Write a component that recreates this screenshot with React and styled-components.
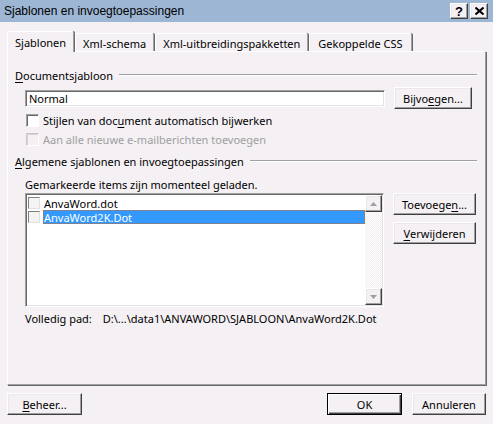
import React from "react";
import styled, { createGlobalStyle, css } from "styled-components";

const GlobalStyle = createGlobalStyle`
  html, body { margin: 0; padding: 0; background: #f4f0f4; }
  * { box-sizing: border-box; }
  body { font-family: "Noto Sans", "Liberation Sans", sans-serif; font-size: 11px; color: #000; }
`;

const FACE = "#f4f0f4";

const raised = css`
  border-top: 1px solid #ffffff;
  border-left: 1px solid #ffffff;
  border-right: 1px solid #404040;
  border-bottom: 1px solid #404040;
  box-shadow: inset -1px -1px 0 #a0a0a0, inset 1px 1px 0 #ebe7eb;
`;

const sunken = css`
  border-top: 1px solid #a0a0a0;
  border-left: 1px solid #a0a0a0;
  border-right: 1px solid #ffffff;
  border-bottom: 1px solid #ffffff;
  box-shadow: inset 1px 1px 0 #696969, inset -1px -1px 0 #e3e3e3;
`;

const Window = styled.div`
  width: 493px;
  height: 424px;
  background: ${FACE};
  display: flex;
  flex-direction: column;
  overflow: hidden;
`;

const TitleBar = styled.div`
  height: 22px;
  background: #9db6d4;
  display: flex;
  align-items: center;
  padding: 0 5px 0 4px;
`;

const TitleText = styled.div`
  flex: 1;
  font-family: "Liberation Sans", "Noto Sans", sans-serif;
  font-size: 12px;
  color: #000;
  line-height: 22px;
  white-space: nowrap;
`;

const CaptionButtons = styled.div`
  display: flex;
  gap: 2px;
`;

const CaptionButton = styled.div`
  width: 18px;
  height: 16px;
  background: ${FACE};
  ${raised};
  display: flex;
  align-items: center;
  justify-content: center;
  font-weight: bold;
  font-size: 13px;
  font-family: "Liberation Sans", sans-serif;
  line-height: 1;
`;

const Body = styled.div`
  flex: 1;
  display: flex;
  flex-direction: column;
  padding: 9px 7px 0 7px;
`;

const TabStrip = styled.div`
  display: flex;
  align-items: flex-end;
  height: 20px;
  position: relative;
  z-index: 1;
`;

const Tab = styled.div`
  height: ${(p) => (p.$active ? "21px" : "18px")};
  margin-bottom: ${(p) => (p.$active ? "-1px" : "0")};
  padding: 0 ${(p) => p.$pad}px;
  background: ${FACE};
  border-top: 1px solid #ffffff;
  border-left: 1px solid #ffffff;
  border-right: 1px solid #a0a0a0;
  box-shadow: 1px 0 0 #696969;
  border-radius: 2px 2px 0 0;
  display: flex;
  align-items: flex-start;
  padding-top: ${(p) => (p.$active ? "3px" : "2px")};
  white-space: nowrap;
  margin-right: 1px;
`;

const TabPanel = styled.div`
  width: 479px;
  height: 334px;
  border-top: 1px solid #ffffff;
  border-left: 1px solid #ffffff;
  border-right: 1px solid #a0a0a0;
  border-bottom: 1px solid #a0a0a0;
  box-shadow: 1px 1px 0 #696969;
  padding: 16px 8px 0 7px;
  display: flex;
  flex-direction: column;
`;

const GroupHeader = styled.div`
  display: flex;
  align-items: center;
  height: 14px;
  margin-top: ${(p) => p.$mt || 0}px;
  white-space: nowrap;
  &::after {
    content: "";
    flex: 1;
    margin-left: 6px;
    height: 0;
    border-top: 1px solid #a0a0a0;
    border-bottom: 1px solid #ffffff;
  }
`;

const U = styled.span`
  text-decoration: underline;
  text-underline-offset: 2px;
`;

const InputRow = styled.div`
  display: flex;
  align-items: center;
  height: 22px;
  margin-top: 5px;
  padding-left: 10px;
`;

const TextInput = styled.div`
  width: 360px;
  height: 17px;
  background: #ffffff;
  ${sunken};
  padding: 0 3px;
  display: flex;
  align-items: center;
  line-height: 1;
`;

const Button = styled.div`
  width: ${(p) => p.$w}px;
  height: 22px;
  margin-left: ${(p) => p.$ml || 0}px;
  background: ${FACE};
  ${(p) =>
    p.$default
      ? css`
          border: 1px solid #000;
          box-shadow: inset 1px 1px 0 #ffffff, inset -1px -1px 0 #404040, inset -2px -2px 0 #a0a0a0;
        `
      : raised};
  display: flex;
  align-items: center;
  justify-content: center;
  white-space: nowrap;
  flex-shrink: 0;
`;

const CheckRow = styled.div`
  display: flex;
  align-items: center;
  height: 13px;
  margin-top: ${(p) => p.$mt}px;
  padding-left: 11px;
  color: ${(p) => (p.$disabled ? "#a0a0a0" : "#000")};
  white-space: nowrap;
`;

const CheckBox = styled.span`
  width: 13px;
  height: 13px;
  flex-shrink: 0;
  background: ${(p) => (p.$disabled ? FACE : "#ffffff")};
  border-top: 1px solid ${(p) => (p.$disabled ? "#c8c4c8" : "#a0a0a0")};
  border-left: 1px solid ${(p) => (p.$disabled ? "#c8c4c8" : "#a0a0a0")};
  border-right: 1px solid #ffffff;
  border-bottom: 1px solid #ffffff;
  box-shadow: inset 1px 1px 0 ${(p) => (p.$disabled ? "#d8d4d8" : "#696969")};
  margin-right: 4px;
`;

const Caption = styled.div`
  height: 14px;
  display: flex;
  align-items: center;
  margin-top: ${(p) => p.$mt || 0}px;
  padding-left: 10px;
  white-space: nowrap;
`;

const ListArea = styled.div`
  display: flex;
  align-items: flex-start;
  margin-top: 2px;
  padding-left: 10px;
`;

const ListBox = styled.div`
  width: 359px;
  height: 114px;
  background: #ffffff;
  ${sunken};
  padding: 2px;
  display: flex;
`;

const Items = styled.div`
  flex: 1;
  display: flex;
  flex-direction: column;
`;

const Item = styled.div`
  height: 14px;
  display: flex;
  align-items: center;
  white-space: nowrap;
`;

const ItemCheck = styled.span`
  width: 12px;
  height: 12px;
  flex-shrink: 0;
  margin: 0 3px 0 0;
  background: #f4f4f4;
  border-top: 1px solid #808080;
  border-left: 1px solid #808080;
  border-right: 1px solid #e0e0e0;
  border-bottom: 1px solid #e0e0e0;
`;

const ItemText = styled.span`
  flex: 1;
  height: 14px;
  display: flex;
  align-items: center;
  padding-left: 1px;
  ${(p) =>
    p.$selected &&
    css`
      background: #3399ff;
      color: #ffffff;
      outline: 1px dotted #c86a2a;
      outline-offset: -1px;
    `}
`;

const ScrollBar = styled.div`
  width: 17px;
  display: flex;
  flex-direction: column;
  margin: -1px -1px -1px 0;
`;

const ScrollTrack = styled.div`
  flex: 1;
  background: repeating-conic-gradient(#ffffff 0 25%, #f1edf1 0 50%) 0 0 / 2px 2px;
`;

const ScrollButton = styled.div`
  width: 17px;
  height: 17px;
  background: ${FACE};
  ${raised};
  display: flex;
  align-items: center;
  justify-content: center;
`;

const SideButtons = styled.div`
  display: flex;
  flex-direction: column;
  gap: 7px;
  margin-left: 9px;
`;

const PathRow = styled.div`
  display: flex;
  align-items: center;
  height: 14px;
  margin-top: 4px;
  padding-left: 10px;
  white-space: nowrap;
  gap: 11px;
`;

const Footer = styled.div`
  display: flex;
  align-items: center;
  margin-top: 8px;
`;

const Spacer = styled.div`
  flex: 1;
`;

const Arrow = ({ up }) => (
  <svg width="7" height="4" viewBox="0 0 7 4">
    <path d={up ? "M0 4 L3.5 0 L7 4 Z" : "M0 0 L3.5 4 L7 0 Z"} fill="#a0a0a0" />
  </svg>
);

export default function App() {
  return (
    <>
      <GlobalStyle />
      <Window>
        <TitleBar>
          <TitleText>Sjablonen en invoegtoepassingen</TitleText>
          <CaptionButtons>
            <CaptionButton>?</CaptionButton>
            <CaptionButton>
              <svg width="9" height="8" viewBox="0 0 9 8">
                <path d="M0.5 0.5 L8.5 7.5 M8.5 0.5 L0.5 7.5" stroke="#000" strokeWidth="2" />
              </svg>
            </CaptionButton>
          </CaptionButtons>
        </TitleBar>
        <Body>
          <TabStrip>
            <Tab $active $pad={7}>Sjablonen</Tab>
            <Tab $pad={7}>Xml-schema</Tab>
            <Tab $pad={7}>Xml-uitbreidingspakketten</Tab>
            <Tab $pad={8}>Gekoppelde CSS</Tab>
          </TabStrip>
          <TabPanel>
            <GroupHeader>
              <span><U>D</U>ocumentsjabloon</span>
            </GroupHeader>
            <InputRow>
              <TextInput>Normal</TextInput>
              <Button $w={78} $ml={9}>Bijvo<U>e</U>gen...</Button>
            </InputRow>
            <CheckRow $mt={5}>
              <CheckBox />
              <span>Stijlen van doc<U>u</U>ment automatisch bijwerken</span>
            </CheckRow>
            <CheckRow $mt={6} $disabled>
              <CheckBox $disabled />
              <span>Aan alle nieuwe e-mailberichten toevoegen</span>
            </CheckRow>
            <GroupHeader $mt={8}>
              <span><U>A</U>lgemene sjablonen en invoegtoepassingen</span>
            </GroupHeader>
            <Caption $mt={9}>Gemarkeerde items zijn momenteel geladen.</Caption>
            <ListArea>
              <ListBox>
                <Items>
                  <Item>
                    <ItemCheck />
                    <ItemText>AnvaWord.dot</ItemText>
                  </Item>
                  <Item>
                    <ItemCheck />
                    <ItemText $selected>AnvaWord2K.Dot</ItemText>
                  </Item>
                </Items>
                <ScrollBar>
                  <ScrollButton><Arrow up /></ScrollButton>
                  <ScrollTrack />
                  <ScrollButton><Arrow /></ScrollButton>
                </ScrollBar>
              </ListBox>
              <SideButtons>
                <Button $w={83}>Toevoege<U>n</U>...</Button>
                <Button $w={83}><U>V</U>erwijderen</Button>
              </SideButtons>
            </ListArea>
            <PathRow>
              <span>Volledig pad:</span>
              <span>D:\...\data1\ANVAWORD\SJABLOON\AnvaWord2K.Dot</span>
            </PathRow>
          </TabPanel>
          <Footer>
            <Button $w={75}><U>B</U>eheer...</Button>
            <Spacer />
            <Button $w={75} $default>OK</Button>
            <Button $w={74} $ml={10}>Annuleren</Button>
          </Footer>
        </Body>
      </Window>
    </>
  );
}
